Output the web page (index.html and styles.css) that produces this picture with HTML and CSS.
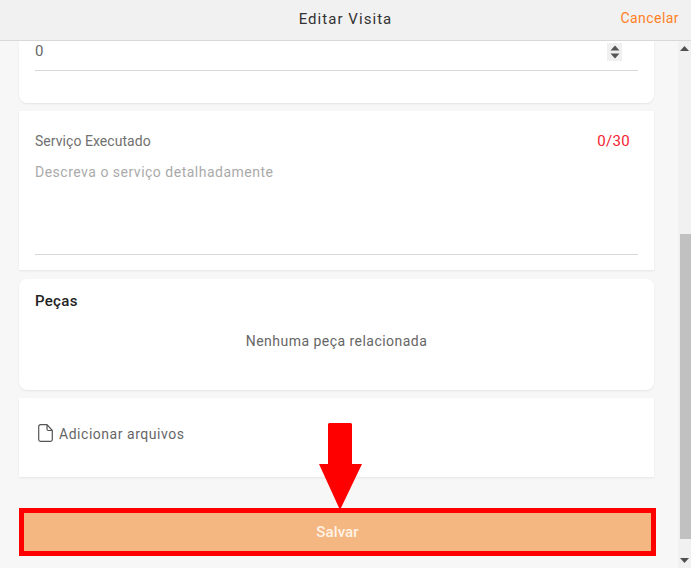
FILE: index.html
```html
<!DOCTYPE html>
<html lang="pt-BR">
<head>
    <meta charset="UTF-8">
    <meta name="viewport" content="width=device-width, initial-scale=1.0">
    <title>Editar Visita</title>
    <link rel="stylesheet" href="styles.css">
</head>
<body>
    <header class="top-bar">
        <div class="top-title">Editar Visita</div>
        <div class="top-cancel">Cancelar</div>
    </header>
    <div class="page-body">
        <main class="content">
            <section class="card card-number">
                <div class="number-row">
                    <span>0</span>
                    <span class="spinner">
                        <svg width="10" height="14" viewBox="0 0 10 14"><path d="M5 0.5 9.5 5.5H0.5Z M0.5 8.5H9.5L5 13.5Z" fill="#555"/></svg>
                    </span>
                </div>
            </section>
            <section class="card card-service">
                <div class="service-head">
                    <span>Serviço Executado</span>
                    <span class="counter">0/30</span>
                </div>
                <div class="service-input">Descreva o serviço detalhadamente</div>
            </section>
            <section class="card card-parts">
                <h2 class="parts-title">Peças</h2>
                <p class="parts-empty">Nenhuma peça relacionada</p>
            </section>
            <section class="card card-files">
                <svg class="file-icon" width="15" height="18" viewBox="0 0 15 18" fill="none" stroke="#555" stroke-width="1.2" stroke-linejoin="round"><path d="M2.500 0.700H9L14.300 6.500V15.500A1.800 1.800 0 0 1 12.500 17.300H2.500A1.800 1.800 0 0 1 0.700 15.500V2.500A1.800 1.800 0 0 1 2.500 0.700Z M9 0.700V5A1.500 1.500 0 0 0 10.500 6.500H14.300"/></svg>
                <span>Adicionar arquivos</span>
            </section>
            <button class="save-btn">Salvar</button>
        </main>
        <div class="scrollbar">
            <svg class="scroll-arrow" width="9" height="5" viewBox="0 0 9 5"><path d="M4.5 0 9 5H0Z" fill="#505050"/></svg>
            <div class="scroll-track"><div class="scroll-thumb"></div></div>
            <svg class="scroll-arrow" width="9" height="5" viewBox="0 0 9 5"><path d="M0 0H9L4.500 5Z" fill="#505050"/></svg>
        </div>
    </div>
    <svg class="red-arrow" width="43" height="87" viewBox="0 0 43 87"><path d="M9 1.500Q9 0 10.500 0H31.500Q33 0 33 1.500V41H43L21 87 0 41H9Z" fill="#f00"/></svg>
</body>
</html>
```

FILE: styles.css
```css
* { box-sizing: border-box; margin: 0; padding: 0; }
html, body { height: 100%; overflow: hidden; }
body {
    display: flex;
    flex-direction: column;
    font-family: Roboto, "Liberation Sans", sans-serif;
    font-size: 14px;
    letter-spacing: 0.3px;
    color: #666;
    background-color: #f7f7f7;
}
.top-bar {
    position: relative;
    flex: 0 0 41px;
    display: flex;
    align-items: center;
    justify-content: center;
    padding-bottom: 2px;
    background-color: #f1f1f1;
    border-bottom: 1px solid #d8d8d8;
}
.top-title {
    font-size: 15px;
    letter-spacing: 1.05px;
    color: #333;
}
.top-cancel {
    position: absolute;
    right: 12px;
    top: 10px;
    color: #ff7f1f;
    letter-spacing: 0.45px;
}
.page-body {
    flex: 1;
    display: flex;
    min-height: 0;
}
.content {
    flex: 1;
    display: flex;
    flex-direction: column;
    padding: 0 24px 0 19px;
    overflow: hidden;
}
.card {
    flex: none;
    background-color: #fff;
    box-shadow: 0 1px 2px rgba(0, 0, 0, 0.08);
}
.card-number {
    height: 62px;
    padding: 0 16px;
    border-radius: 0 0 8px 8px;
    margin-bottom: 8px;
}
.number-row {
    height: 30px;
    display: flex;
    align-items: flex-start;
    justify-content: space-between;
    padding-right: 16px;
    border-bottom: 1px solid #d8d8d8;
    font-size: 15px;
}
.number-row span:first-child { padding-top: 1px; }
.spinner {
    width: 15px;
    height: 18px;
    margin-top: 2px;
    display: flex;
    align-items: center;
    justify-content: center;
    background-color: #f0f0f0;
}
.card-service {
    height: 159px;
    padding: 22px 16px 0;
    margin-bottom: 9px;
}
.service-head {
    display: flex;
    justify-content: space-between;
    padding-right: 8px;
    line-height: 17px;
    letter-spacing: 0.05px;
    color: #707070;
}
.counter { color: #f5222d; font-size: 15px; letter-spacing: 0.3px; }
.service-input {
    height: 91px;
    margin-top: 14px;
    border-bottom: 1px solid #d8d8d8;
    color: #aaa;
    line-height: 17px;
    letter-spacing: 0.5px;
}
.card-parts {
    height: 111px;
    padding: 13px 16px 0;
    border-radius: 8px;
    margin-bottom: 8px;
}
.parts-title {
    font-size: 15px;
    font-weight: 500;
    color: #222;
    line-height: 18px;
}
.parts-empty {
    margin-top: 23px;
    text-align: center;
    line-height: 17px;
    letter-spacing: 0.47px;
}
.card-files {
    height: 79px;
    padding: 27px 16px 0 19px;
    display: flex;
    align-items: flex-start;
    gap: 6px;
    line-height: 18px;
    letter-spacing: 0.53px;
}
.file-icon { flex: none; margin-top: -1px; }
.save-btn {
    flex: none;
    width: 637px;
    height: 48px;
    margin-top: 31px;
    border: 5px solid #f00;
    background-color: #f5b782;
    color: #fff3e6;
    font-family: inherit;
    font-size: 15px;
    font-weight: 500;
    letter-spacing: 0.1px;
}
.scrollbar {
    flex: 0 0 13px;
    display: flex;
    flex-direction: column;
    align-items: center;
    background-color: #f1f1f1;
}
.scroll-arrow { flex: none; margin: 5px 0; }
.scroll-track {
    flex: 1;
    width: 100%;
    padding: 179px 0 0 2px;
    display: flex;
    min-height: 0;
    margin-top: -1px;
    margin-bottom: 2px;
}
.scroll-thumb {
    flex: 1;
    height: 305px;
    background-color: #c1c1c1;
}
.red-arrow {
    position: absolute;
    left: 319px;
    top: 423px;
}
```
